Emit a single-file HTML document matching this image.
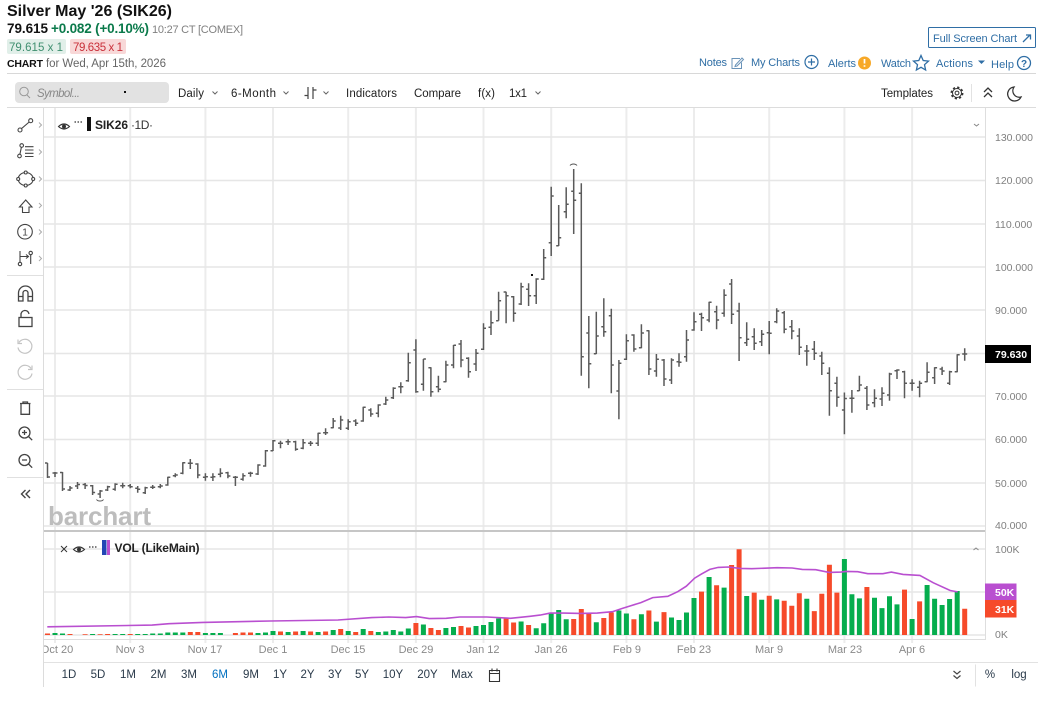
<!DOCTYPE html>
<html><head><meta charset="utf-8"><title>Silver May '26 (SIK26)</title>
<style>
html,body{margin:0;padding:0;background:#fff;width:1057px;height:712px;overflow:hidden}
svg{display:block;font-family:"Liberation Sans",sans-serif}
.t{font-size:11.5px;fill:#222}
.a{font-size:10.5px;fill:#808080}
.b{font-size:11px;fill:#2f6ea5}
.m{font-size:11.5px;fill:#2a3a4a;text-anchor:middle}
.i{fill:none;stroke:#444;stroke-width:1.1}
.c{fill:none;stroke:#666;stroke-width:1}
</style></head><body>
<svg width="1057" height="712" viewBox="0 0 1057 712" xmlns="http://www.w3.org/2000/svg">
<!-- header -->
<text x="7" y="16" font-size="16" font-weight="700" fill="#111" textLength="165" lengthAdjust="spacing">Silver May '26 (SIK26)</text>
<text x="7" y="33" font-size="13.5" font-weight="700" fill="#111" textLength="41" lengthAdjust="spacing">79.615</text>
<text x="51" y="33" font-size="13.5" font-weight="700" fill="#0b7a4b" textLength="98" lengthAdjust="spacing">+0.082 (+0.10%)</text>
<text x="152" y="33" font-size="11" fill="#808080" textLength="91" lengthAdjust="spacing">10:27 CT [COMEX]</text>
<rect x="7" y="39" width="59" height="15" rx="2" fill="#e1efe9"/>
<text x="9" y="51" font-size="11.500" fill="#3f8f70" textLength="54" lengthAdjust="spacing">79.615 x 1</text>
<rect x="70" y="39" width="56" height="15" rx="2" fill="#f8d8d8"/>
<text x="73" y="51" font-size="11.500" fill="#c9303a" textLength="50" lengthAdjust="spacing">79.635 x 1</text>
<text x="7" y="67" font-size="10.500" font-weight="700" fill="#111" textLength="36" lengthAdjust="spacing">CHART</text>
<text x="46" y="67" font-size="11.500" fill="#666" textLength="120" lengthAdjust="spacing">for Wed, Apr 15th, 2026</text>
<!-- top right -->
<rect x="928.500" y="27.500" width="107" height="20" rx="1" fill="#fff" stroke="#2f6ea5"/>
<text x="933" y="42" class="b" textLength="84" lengthAdjust="spacing">Full Screen Chart</text>
<path d="M1023 42l7-7M1026 35h4.500v4.500" fill="none" stroke="#2f6ea5" stroke-width="1.300"/>
<text x="699" y="66" class="b" textLength="28" lengthAdjust="spacing">Notes</text>
<path d="M740 58.500h-8v10h9.500v-6M735.500 65l6.500-7 1.500 1.500-6.500 6.500-2 .5z" fill="none" stroke="#6a93b8" stroke-width="1"/>
<text x="751" y="66" class="b" textLength="49" lengthAdjust="spacing">My Charts</text>
<circle cx="811.500" cy="62" r="6.500" fill="none" stroke="#2f6ea5" stroke-width="1.200"/><path d="M811.500 58.500v7M808 62h7" stroke="#2f6ea5" stroke-width="1.200"/>
<text x="828" y="67" class="b" textLength="28" lengthAdjust="spacing">Alerts</text>
<circle cx="864.500" cy="63" r="6.500" fill="#f7a827"/><path d="M864.500 59v4.500M864.500 65.200v1.600" stroke="#fff" stroke-width="1.700"/>
<text x="881" y="67" class="b" textLength="30" lengthAdjust="spacing">Watch</text>
<path d="M921 55.500l2.200 5 5.300.6-4 3.600 1.100 5.300-4.600-2.700-4.600 2.700 1.100-5.300-4-3.600 5.300-.6z" fill="none" stroke="#2f6ea5" stroke-width="1.300"/>
<text x="936" y="67" class="b" textLength="37" lengthAdjust="spacing">Actions</text>
<path d="M978 60.500h7l-3.500 3.500z" fill="#2f6ea5"/>
<text x="991" y="68" class="b" textLength="23" lengthAdjust="spacing">Help</text>
<circle cx="1024" cy="63" r="6.500" fill="none" stroke="#2f6ea5" stroke-width="1.300"/><text x="1024" y="67" font-size="10" font-weight="700" fill="#2f6ea5" text-anchor="middle">?</text>
<path d="M7 73.500H1036" stroke="#d8d8d8"/>
<!-- toolbar -->
<rect x="15" y="82" width="154" height="21" rx="4" fill="#e2e2e2"/>
<circle cx="24" cy="91.500" r="4.300" fill="none" stroke="#999" stroke-width="1"/><path d="M27 95l3 3" stroke="#999" stroke-width="1"/>
<text x="37" y="97" font-size="11.500" font-style="italic" fill="#888" textLength="43" lengthAdjust="spacing">Symbol...</text>
<rect x="124" y="91" width="2" height="2" fill="#111"/>
<text x="178" y="97" class="t" textLength="26" lengthAdjust="spacing">Daily</text>
<path class="c" d="M212.500 91.500l2.500 2.500 2.500-2.500M283.500 91.500l2.500 2.500 2.500-2.500M323.500 91.500l2.500 2.500 2.500-2.500M535.500 91.500l2.500 2.500 2.500-2.500"/>
<text x="231" y="97" class="t" textLength="45" lengthAdjust="spacing">6-Month</text>
<path d="M308 87v12M304.500 95.500h3.500M313 87v12M313 90h3.500" fill="none" stroke="#444" stroke-width="1.200"/>
<text x="346" y="97" class="t" textLength="51" lengthAdjust="spacing">Indicators</text>
<text x="414" y="97" class="t" textLength="47" lengthAdjust="spacing">Compare</text>
<text x="478" y="97" class="t" textLength="17" lengthAdjust="spacing">f(x)</text>
<text x="509" y="97" class="t" textLength="18" lengthAdjust="spacing">1x1</text>
<text x="881" y="97" class="t" textLength="52" lengthAdjust="spacing">Templates</text>
<circle cx="957" cy="93" r="1.900" fill="none" stroke="#333" stroke-width="1"/><circle cx="957" cy="93" r="4.500" fill="none" stroke="#333" stroke-width="1"/><circle cx="957" cy="93" r="5.600" fill="none" stroke="#333" stroke-width="1.700" stroke-dasharray="2.200 2.200"/>
<path d="M971.500 84v18" stroke="#e2e2e2"/>
<path d="M984 92l4-4 4 4M984 97l4-4 4 4" fill="none" stroke="#333" stroke-width="1.300"/>
<path d="M1014 87a7 7 0 1 0 7 10a6.500 6.500 0 0 1-7-10z" fill="none" stroke="#333" stroke-width="1.300"/>
<path d="M7 107.500H1036" stroke="#dcdcdc"/>
<!-- grid -->
<g stroke="#ececec" stroke-width="2" fill="none">
<path d="M55 108V643M130.200 108V643M205.400 108V643M273 108V643M348.200 108V643M415.900 108V643M483.500 108V643M551.200 108V643M626.400 108V643M694 108V643M769.200 108V643M844.400 108V643M912.100 108V643"/>
</g>
<g stroke="#e6e6e6" stroke-width="1.500" fill="none">
<path d="M44 137H985M44 180.500H985M44 224H985M44 267H985M44 310H985M44 353.500H985M44 396H985M44 439.500H985M44 483H985M44 526H985M44 549H985M44 592H985M44 635H985"/>
</g>
<path d="M44 531H985" stroke="#c6c6c6" stroke-width="2"/>
<path d="M44 639.500H985.500V108" fill="none" stroke="#dedede"/>
<path d="M44 662.500H1038" stroke="#e2e2e2"/>
<path d="M43.500 108V687" stroke="#dcdcdc"/>
<path d="M7 275.500H43M7 389.500H43M7 477.500H43" stroke="#e0e0e0"/>
<!-- left tools -->
<g class="i">
<circle cx="20" cy="130" r="2"/><circle cx="30.700" cy="120.700" r="2"/><path d="M21.500 128.600l7.700-6.600"/>
<circle cx="21.700" cy="145.500" r="1.800"/><circle cx="19.500" cy="156" r="1.800"/><path d="M21.400 147.300l-1.500 6.900M25 146.700h8.500M25 150h8.500M25 153.300h8.500M25 156.500h8.500"/>
<ellipse cx="25.700" cy="179" rx="7.500" ry="6.500"/><circle cx="25.700" cy="172.500" r="1.500" fill="#fff"/><circle cx="25.700" cy="185.500" r="1.500" fill="#fff"/><circle cx="18.200" cy="179" r="1.500" fill="#fff"/><circle cx="33.200" cy="179" r="1.500" fill="#fff"/>
<path d="M25.700 200l-6.200 7h3v5.500h6.500V207h3z"/>
<circle cx="25" cy="231.700" r="7.300"/>
<path d="M20 251v11M20 256.500h8M26 254.500l2.500 2-2.500 2M30.700 255v9"/><circle cx="30.700" cy="253" r="1.700"/><circle cx="20" cy="264" r="1.700"/>
<path d="M18.500 301v-8a7 7 0 0 1 14 0v8h-4.500v-8a2.500 2.500 0 0 0-5 0v8zM18.500 296.500H23M28 296.500h4.500" stroke-width="1.300"/>
<rect x="19" y="317.500" width="13" height="9" stroke-width="1.300"/><path d="M21 317.500v-2.500a4 4 0 0 1 8-1" stroke-width="1.300"/>
<path d="M20 403.500h10.500M23 403.500v-1.500h4.500v1.500M21 403.500v10.800h8.500v-10.800" stroke-width="1.300"/>
<circle cx="24.500" cy="432.500" r="5.500" stroke-width="1.300"/><path d="M28.500 436.500l3.700 3.700M22 432.500h5M24.500 430v5" stroke-width="1.300"/>
<circle cx="24.500" cy="460" r="5.500" stroke-width="1.300"/><path d="M28.500 464l3.700 3.700M22 460h5" stroke-width="1.300"/>
<path d="M25.500 490l-4 4 4 4M30 490l-4 4 4 4" stroke-width="1.400"/>
</g>
<text x="25" y="235.500" font-size="10" fill="#444" text-anchor="middle">1</text>
<g fill="none" stroke="#c4c4c4" stroke-width="1.200">
<path d="M19 342.500a7 7 0 1 1-1 5M18 339.500v4h4M31 368.500a7 7 0 1 0 1 5M32 365.500v4h-4"/>
</g>
<path d="M39 122.500l2.500 2.500-2.500 2.500M39 149.500l2.500 2.500-2.500 2.500M39 176.500l2.500 2.500-2.500 2.500M39 203l2.500 2.500-2.500 2.500M39 229.500l2.500 2.500-2.500 2.500M39 256l2.500 2.500-2.500 2.500" fill="none" stroke="#aaa"/>
<!-- watermark -->
<text x="48" y="525" font-size="26" font-weight="700" fill="#bdbdbd" textLength="103" lengthAdjust="spacing">barchart</text>
<!-- price bars -->
<path fill="none" stroke="#5a5a5a" stroke-width="1.500" d="
M47.500 463V478M47.500 463h-2.500M47.500 477h2.500
M55 472V477M55 473h-2.500M55 473h2.500
M62.500 472V491M62.500 472.500h-2.500M62.500 489h2.500
M70 486V491M70 490h-2.500M70 488h2.500
M77.500 482V489M77.500 486h-2.500M77.500 484.500h2.500
M85.100 483V489M85.100 484.500h-2.500M85.100 485.500h2.500
M92.600 485V495M92.600 485.700h-2.500M92.600 492.500h2.500
M100.100 490V498M100.100 494h-2.500M100.100 491h2.500
M107.600 485.700V491M107.600 490h-2.500M107.600 486.700h2.500
M115.100 483.300V490.700M115.100 489.300h-2.500M115.100 484.300h2.500
M122.700 482.700V488.300M122.700 485.700h-2.500M122.700 485.700h2.500
M130.200 484V488.300M130.200 485.700h-2.500M130.200 486.700h2.500
M137.700 486V492.700M137.700 488.300h-2.500M137.700 489.300h2.500
M145.200 486.700V494M145.200 492.700h-2.500M145.200 487.700h2.500
M152.700 485V489M152.700 487.300h-2.500M152.700 487.300h2.500
M160.300 484V488.300M160.300 486.700h-2.500M160.300 486h2.500
M167.800 476.700V485.700M167.800 485h-2.500M167.800 477.300h2.500
M175.300 473.300V477.300M175.300 475.700h-2.500M175.300 475h2.500
M182.800 462.300V474.300M182.800 473.300h-2.500M182.800 462.700h2.500
M190.300 459V469M190.300 463.300h-2.500M190.300 463.300h2.500
M197.800 463.300V478.300M197.800 464h-2.500M197.800 475h2.500
M205.400 473.300V480.700M205.400 477.300h-2.500M205.400 476.700h2.500
M212.900 473.300V481M212.900 477.300h-2.500M212.900 476.700h2.500
M220.400 468.300V477.300M220.400 474.300h-2.500M220.400 473.300h2.500
M227.900 471.700V478.300M227.900 472.700h-2.500M227.900 476h2.500
M235.400 476V486M235.400 477.300h-2.500M235.400 477.300h2.500
M243 473.300V480.700M243 479.300h-2.500M243 475.700h2.500
M250.500 471.700V476.700M250.500 473.300h-2.500M250.500 473.300h2.500
M258 464.300V475M258 474h-2.500M258 465h2.500
M265.500 450V466.700M265.500 466h-2.500M265.500 450.700h2.500
M273 440V451M273 450.700h-2.500M273 440.700h2.500
M280.500 440.700V448.300M280.500 443.300h-2.500M280.500 443.300h2.500
M288.100 439.300V445M288.100 441.700h-2.500M288.100 441.700h2.500
M295.600 440.700V450.700M295.600 441.700h-2.500M295.600 449.300h2.500
M303.100 439V449.300M303.100 448.300h-2.500M303.100 442.700h2.500
M310.600 441V446M310.600 443.300h-2.500M310.600 443.300h2.500
M318.100 432.700V446M318.100 443.300h-2.500M318.100 433.300h2.500
M325.600 428.300V435M325.600 432.700h-2.500M325.600 432.700h2.500
M333.200 418V428.300M333.200 427.700h-2.500M333.200 421h2.500
M340.700 415.700V430M340.700 428h-2.500M340.700 420h2.500
M348.200 419.300V430M348.200 428.300h-2.500M348.200 421.700h2.500
M355.700 419.300V426M355.700 421h-2.500M355.700 423.300h2.500
M363.200 406.700V421.700M363.200 421h-2.500M363.200 407.300h2.500
M370.800 408.300V416.700M370.800 410h-2.500M370.800 414h2.500
M378.300 404.300V417.300M378.300 413.300h-2.500M378.300 405h2.500
M385.800 396.700V405M385.800 404h-2.500M385.800 400h2.500
M393.300 387.300V399M393.300 397.700h-2.500M393.300 388.300h2.500
M400.800 382.300V393.300M400.800 386.700h-2.500M400.800 386.700h2.500
M408.300 352.700V381.700M408.300 380.700h-2.500M408.300 362.700h2.500
M415.900 339.300V392.700M415.900 350h-2.500M415.900 391.700h2.500
M423.400 359V390.700M423.400 384.300h-2.500M423.400 359h2.500
M430.900 367.300V396.700M430.900 367.700h-2.500M430.900 391.700h2.500
M438.400 375.700V392.300M438.400 386.700h-2.500M438.400 389.300h2.500
M445.900 360.700V382.300M445.900 381.700h-2.500M445.900 365h2.500
M453.500 345V368.300M453.500 365h-2.500M453.500 345.300h2.500
M461 340V367.300M461 344h-2.500M461 360h2.500
M468.500 357.300V377.700M468.500 358.300h-2.500M468.500 371.700h2.500
M476 349V371M476 364h-2.500M476 353.300h2.500
M483.500 323.300V350M483.500 349.300h-2.500M483.500 328.300h2.500
M491 310.700V335M491 327.300h-2.500M491 322.700h2.500
M498.600 291.700V320.700M498.600 320.700h-2.500M498.600 300.700h2.500
M506.100 291.700V323.300M506.100 292h-2.500M506.100 295.700h2.500
M513.600 296V321.700M513.600 296.700h-2.500M513.600 313.300h2.500
M521.100 282.700V305M521.100 304h-2.500M521.100 286.700h2.500
M528.600 283.300V306M528.600 289.300h-2.500M528.600 295.700h2.500
M536.200 278.300V304M536.200 295.700h-2.500M536.200 279h2.500
M543.700 249V280M543.700 279.300h-2.500M543.700 257.700h2.500
M551.200 186.700V256M551.200 242.700h-2.500M551.200 196h2.500
M558.700 205V246M558.700 245.700h-2.500M558.700 237.700h2.500
M566.200 187.300V218.300M566.200 211.700h-2.500M566.200 204.300h2.500
M573.700 169V234M573.700 191.300h-2.500M573.700 200.300h2.500
M581.300 183.300V375.700M581.300 193.300h-2.500M581.300 356.700h2.500
M588.800 316V388.300M588.800 333h-2.500M588.800 363.700h2.500
M596.300 311.700V354M596.300 353.700h-2.500M596.300 336h2.500
M603.800 298.300V336.700M603.800 326.700h-2.500M603.800 331.700h2.500
M611.300 308.700V393.300M611.300 315.700h-2.500M611.300 365h2.500
M618.900 360V419.300M618.900 391h-2.500M618.900 363.300h2.500
M626.400 334.300V360M626.400 359.300h-2.500M626.400 340.700h2.500
M633.900 334.300V351.700M633.900 335h-2.500M633.900 349h2.500
M641.400 324.300V348.300M641.400 347.700h-2.500M641.400 333h2.500
M648.900 330.300V375M648.900 330.700h-2.500M648.900 369h2.500
M656.400 354V376.700M656.400 371h-2.500M656.400 359.300h2.500
M664 359V386M664 360h-2.500M664 379h2.500
M671.500 358.300V384M671.500 380h-2.500M671.500 360h2.500
M679 353.300V366.700M679 361.700h-2.500M679 362.300h2.500
M686.500 330V361.700M686.500 356.700h-2.500M686.500 340h2.500
M694 312.300V330.700M694 330h-2.500M694 321.700h2.500
M701.500 312.700V331M701.500 314.300h-2.500M701.500 317.700h2.500
M709.100 301.700V322.300M709.100 320h-2.500M709.100 302.300h2.500
M716.600 305.700V329.300M716.600 311.700h-2.500M716.600 320h2.500
M724.100 289.300V316.700M724.100 313.300h-2.500M724.100 295.300h2.500
M731.600 279V324M731.600 284h-2.500M731.600 314.300h2.500
M739.100 302.700V361M739.100 311h-2.500M739.100 337.700h2.500
M746.700 322.300V346M746.700 342.700h-2.500M746.700 339.300h2.500
M754.200 328.300V350M754.200 336.700h-2.500M754.200 343.300h2.500
M761.700 330V346M761.700 341.700h-2.500M761.700 334.300h2.500
M769.200 321V354.300M769.200 332.700h-2.500M769.200 333.300h2.500
M776.700 308.300V323.300M776.700 321.700h-2.500M776.700 311h2.500
M784.200 311V333.300M784.200 312.700h-2.500M784.200 329.300h2.500
M791.800 320V339.300M791.800 326.700h-2.500M791.800 331h2.500
M799.300 328.300V355M799.300 336h-2.500M799.300 347.300h2.500
M806.800 345V365.700M806.800 351h-2.500M806.800 351h2.500
M814.300 341V360M814.300 349.300h-2.500M814.300 353.300h2.500
M821.800 351.700V375M821.800 356h-2.500M821.800 363.300h2.500
M829.400 367.300V415.700M829.400 373.300h-2.500M829.400 390.700h2.500
M836.900 376.700V406.700M836.900 383.300h-2.500M836.900 397.300h2.500
M844.400 392.500V434.300M844.400 410h-2.500M844.400 398.500h2.500
M851.900 390V412.700M851.900 398.300h-2.500M851.900 398.300h2.500
M859.400 375.700V391M859.400 390.700h-2.500M859.400 385h2.500
M866.900 386V410M866.900 388.300h-2.500M866.900 405h2.500
M874.500 389.300V407.300M874.500 402.700h-2.500M874.500 398.300h2.500
M882 387.300V406M882 399h-2.500M882 393.300h2.500
M889.500 372.700V400.700M889.500 395h-2.500M889.500 374h2.500
M897 369.300V379M897 370.700h-2.500M897 370h2.500
M904.500 370.700V398.300M904.500 371.700h-2.500M904.500 383.300h2.500
M912.100 379.300V390.700M912.100 383.300h-2.500M912.100 383.300h2.500
M919.600 380.700V397.300M919.600 387.300h-2.500M919.600 383.300h2.500
M927.100 362.300V382.300M927.100 381.700h-2.500M927.100 372.300h2.500
M934.600 367.300V384M934.600 377.700h-2.500M934.600 367.700h2.500
M942.100 366.700V375M942.100 369h-2.500M942.100 371h2.500
M949.600 370.700V385M949.600 383.300h-2.500M949.600 371.700h2.500
M957.200 354.300V372.300M957.200 371.700h-2.500M957.200 354.700h2.500
M964.700 348.300V360.700M964.700 354h-2.500M964.700 354h2.500
"/>
<path d="M96.500 499.500a4 3 0 0 0 7 0M570 165.500a4 3 0 0 1 7 0" fill="none" stroke="#555" stroke-width="1"/>
<rect x="531" y="274" width="2" height="2" fill="#111"/>
<!-- volume bars -->
<path fill="none" stroke="#05ad4d" stroke-width="5" d="M55 635v-2M62.500 635v-1.500M92.600 635v-1M115.100 635v-1M122.700 635v-1M137.700 635v-1M145.200 635v-1M152.700 635v-1.500M160.300 635v-1.500M167.800 635v-2.500M175.300 635v-2.500M182.800 635v-2.500M205.400 635v-2M212.900 635v-2M220.400 635v-2M258 635v-2M265.500 635v-2.500M273 635v-4M288.100 635v-3M303.100 635v-4M318.100 635v-3M333.200 635v-5M348.200 635v-4M363.200 635v-6M378.300 635v-3M385.800 635v-3.500M393.300 635v-5M400.800 635v-3.500M408.300 635v-6.500M423.400 635v-10.500M445.900 635v-7M453.500 635v-8M476 635v-9M483.500 635v-10M491 635v-13M498.600 635v-16.500M521.100 635v-13.500M536.200 635v-6.700M543.700 635v-11.800M551.200 635v-22.500M558.700 635v-25M566.200 635v-15.800M596.300 635v-12.800M618.900 635v-24.500M626.400 635v-21.500M641.400 635v-20.800M656.400 635v-13.400M671.500 635v-17.500M679 635v-15M686.500 635v-22.500M694 635v-37M709.100 635v-58M724.100 635v-47.400M746.700 635v-39M761.700 635v-35.300M776.700 635v-35.600M806.800 635v-36.300M844.400 635v-76M851.900 635v-40.700M859.400 635v-36.600M874.500 635v-37.300M882 635v-26.900M889.500 635v-38.700M897 635v-30.600M912.100 635v-16M927.100 635v-50M934.600 635v-36.300M942.100 635v-30M949.600 635v-36M957.200 635v-44"/>
<path fill="none" stroke="#f64a2a" stroke-width="5" d="M47.500 635v-1.500M70 635v-1M85.100 635v-.8M100.100 635v-.8M107.600 635v-1M130.200 635v-1M190.300 635v-3M197.800 635v-3M235.400 635v-2M243 635v-2.500M250.500 635v-2.500M280.500 635v-3.500M295.600 635v-3.500M310.600 635v-3.500M325.600 635v-3.500M340.700 635v-6M355.700 635v-3M370.800 635v-4M415.900 635v-12M430.900 635v-7M438.400 635v-5M461 635v-9M468.500 635v-7.500M506.100 635v-16.500M513.600 635v-12.500M528.600 635v-10M573.700 635v-16M581.300 635v-26M588.800 635v-21M603.800 635v-17M611.300 635v-22.500M633.900 635v-15.800M648.900 635v-24.500M664 635v-22.900M701.500 635v-43.400M716.600 635v-49.700M731.600 635v-70M739.100 635v-85.700M754.200 635v-42.400M769.200 635v-39.300M784.200 635v-34.300M791.800 635v-29.200M799.300 635v-41.700M814.300 635v-23.900M821.800 635v-41.300M829.400 635v-70.300M836.900 635v-42.400M866.900 635v-48M904.500 635v-45.400M919.600 635v-33.600M964.700 635v-26.200"/>
<path fill="none" stroke="#b94fd0" stroke-width="1.600" d="M47.300 626.800L152.100 625.100 169 623.700 202.800 622.400 270.500 621 338 620 371.900 617.600 388.800 617 405.700 617.600 416.500 616.600 429.300 618.600 446.200 618.300 459.800 617 486.800 617 510.500 618.300 530 616.300 540 615.100 550.200 613.100 563.600 613.100 580.400 613.400 597.200 613.100 612.400 611.700 622.400 608.400 630.800 605.700 640.900 602.600 652.700 597.600 667.800 596.300 677.900 591.600 686.300 586.200 694.700 578.100 701.400 574.100 709.800 569.400 718.200 567.400 728.300 567 740.100 568.400 751.800 568.700 777.100 567.700 792.200 568 802.300 569.400 815.700 569.700 829.200 572.400 840.900 572.100 846 571.400 857.700 571.700 867.800 573.700 882.900 573.700 891.300 572.100 903.100 574.400 919.900 575.400 933.400 582.800 950.200 590.500 957.600 591.900"/>
<!-- legends -->
<path d="M58.500 126.500q5.500-5 11 0q-5.500 5-11 0z" fill="none" stroke="#333" stroke-width="1.100"/><circle cx="64" cy="126.500" r="2" fill="#333"/>
<path d="M74.500 122h1.500M77.500 122h1.500M80.500 122h1.500" stroke="#333" stroke-width="1.300"/>
<rect x="87" y="117" width="4" height="14" fill="#111"/>
<text x="95" y="129" font-size="12" font-weight="700" fill="#222" textLength="33" lengthAdjust="spacing">SIK26</text>
<text x="131" y="129" font-size="12" fill="#333" textLength="22" lengthAdjust="spacing">·1D·</text>
<path d="M974 124l2.500 2 2.500-2" fill="none" stroke="#888"/>
<path d="M61 546l6 6M67 546l-6 6" stroke="#333" stroke-width="1"/>
<path d="M73.500 549.500q5.500-5 11 0q-5.500 5-11 0z" fill="none" stroke="#333" stroke-width="1.100"/><circle cx="79" cy="549.500" r="2" fill="#333"/>
<path d="M89 547h1.500M92 547h1.500M95 547h1.500" stroke="#333" stroke-width="1.300"/>
<rect x="102" y="540" width="4.500" height="15" fill="#2347b5"/><rect x="107" y="540" width="3" height="15" fill="#b94fd0"/>
<text x="114.500" y="552" font-size="12" font-weight="700" fill="#222" textLength="85" lengthAdjust="spacing">VOL (LikeMain)</text>
<path d="M973.500 550l2.500-2 2.500 2" fill="none" stroke="#888"/>
<!-- price axis -->
<g class="a">
<text x="995" y="141">130.000</text><text x="995" y="184">120.000</text><text x="995" y="228">110.000</text><text x="995" y="271">100.000</text><text x="995" y="314">90.000</text><text x="995" y="400">70.000</text><text x="995" y="443">60.000</text><text x="995" y="487">50.000</text><text x="995" y="529">40.000</text>
<text x="995" y="553">100K</text><text x="995" y="638">0K</text>
</g>
<rect x="985" y="345" width="46" height="18" fill="#000"/>
<text x="995" y="358" font-size="10.500" font-weight="700" fill="#fff">79.630</text>
<rect x="985" y="583.500" width="31.500" height="16.500" fill="#b94fd0"/><rect x="985" y="600" width="31.500" height="17.500" fill="#f64a2a"/>
<text x="995" y="596" font-size="10.500" font-weight="700" fill="#fff">50K</text><text x="995" y="613" font-size="10.500" font-weight="700" fill="#fff">31K</text>
<!-- date axis -->
<g font-size="11" fill="#8a8a8a" text-anchor="middle">
<text x="57" y="653">Oct 20</text><text x="130" y="653">Nov 3</text><text x="205" y="653">Nov 17</text><text x="273" y="653">Dec 1</text><text x="348" y="653">Dec 15</text><text x="416" y="653">Dec 29</text><text x="483" y="653">Jan 12</text><text x="551" y="653">Jan 26</text><text x="627" y="653">Feb 9</text><text x="694" y="653">Feb 23</text><text x="769" y="653">Mar 9</text><text x="845" y="653">Mar 23</text><text x="912" y="653">Apr 6</text>
</g>
<rect x="40" y="644" width="4" height="14" fill="#fff"/>
<path d="M43.500 640V687" stroke="#dcdcdc"/>
<!-- bottom toolbar -->
<text x="69" y="678" class="m">1D</text><text x="98" y="678" class="m">5D</text><text x="128" y="678" class="m">1M</text><text x="158.500" y="678" class="m">2M</text><text x="189" y="678" class="m">3M</text><text x="220" y="678" class="m" style="fill:#0070c0">6M</text><text x="251" y="678" class="m">9M</text><text x="280" y="678" class="m">1Y</text><text x="307.500" y="678" class="m">2Y</text><text x="335" y="678" class="m">3Y</text><text x="362" y="678" class="m">5Y</text><text x="393" y="678" class="m">10Y</text><text x="427.500" y="678" class="m">20Y</text><text x="462" y="678" class="m">Max</text>
<path d="M489.500 670.500h10v11h-10zM489.500 673.500h10M492 668.500v3M497 668.500v3" fill="none" stroke="#333" stroke-width="1.100"/>
<path d="M953.500 671l3.500 3 3.500-3M953.500 675.500l3.500 3 3.500-3" fill="none" stroke="#444" stroke-width="1.200"/>
<path d="M975.500 664.500v22" stroke="#e2e2e2"/>
<text x="990" y="678" class="m">%</text><text x="1019" y="678" class="m">log</text>
</svg>
</body></html>
